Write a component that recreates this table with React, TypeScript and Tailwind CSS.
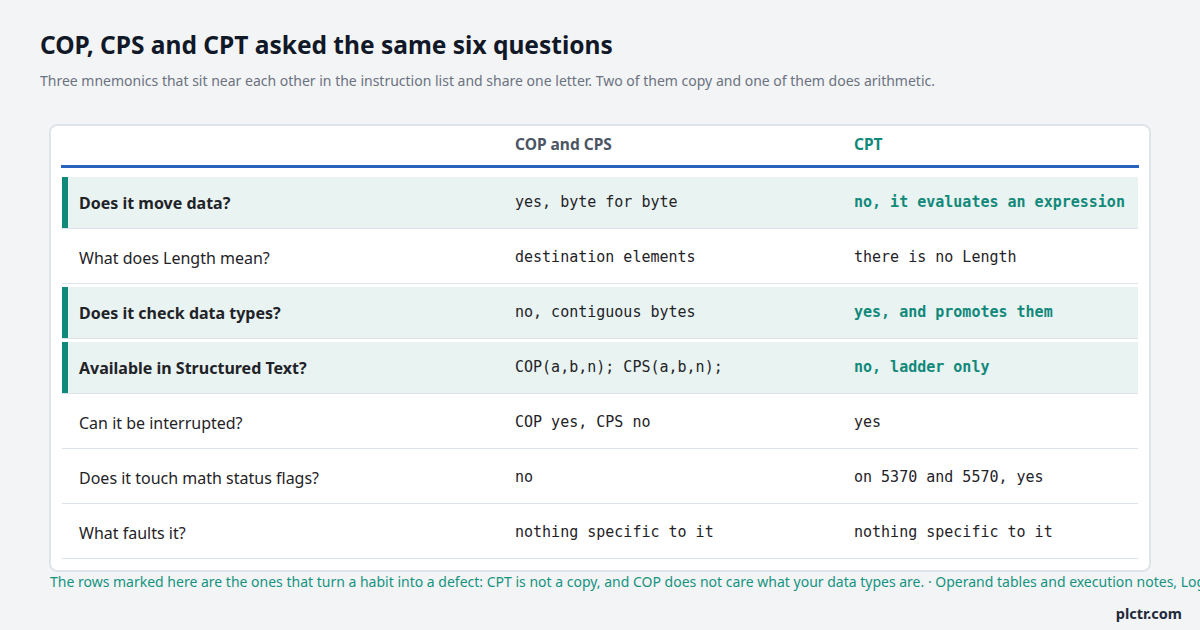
import React from "react";

type Row = { q: string; a: string; b: string; hl: boolean };

const rows: Row[] = [
  { q: "Does it move data?", a: "yes, byte for byte", b: "no, it evaluates an expression", hl: true },
  { q: "What does Length mean?", a: "destination elements", b: "there is no Length", hl: false },
  { q: "Does it check data types?", a: "no, contiguous bytes", b: "yes, and promotes them", hl: true },
  { q: "Available in Structured Text?", a: "COP(a,b,n); CPS(a,b,n);", b: "no, ladder only", hl: true },
  { q: "Can it be interrupted?", a: "COP yes, CPS no", b: "yes", hl: false },
  { q: "Does it touch math status flags?", a: "no", b: "on 5370 and 5570, yes", hl: false },
  { q: "What faults it?", a: "nothing specific to it", b: "nothing specific to it", hl: false },
];

const sans = "font-['Noto_Sans',sans-serif]";
const mono = "font-['DejaVu_Sans_Mono',monospace]";

export default function App() {
  return (
    <div className={`w-[1200px] h-[630px] overflow-hidden bg-[#f3f4f6] ${sans}`}>
      <div className="pl-[40px] pt-[29px]">
        <h1 className="text-[24.5px] leading-[32px] font-bold text-[#111827]">
          COP, CPS and CPT asked the same six questions
        </h1>
        <p className="mt-[10px] text-[14px] leading-[20px] text-[#6b7280]">
          Three mnemonics that sit near each other in the instruction list and share one letter. Two of them copy and one of them does arithmetic.
        </p>
      </div>
      <div className="ml-[49px] mt-[33px] w-[1102px] h-[448px] rounded-[8px] border-2 border-[#dfe4ea] bg-white px-[10px]">
        <div className="grid grid-cols-[437px_339px_1fr] h-[42px] items-end pb-[11px] border-b-[3px] border-[#2a63bd]">
          <div />
          <div className="pl-[17px] text-[15.5px] font-bold text-[#4b5563] leading-[20px]">COP and CPS</div>
          <div className="pl-[17px] text-[15.5px] font-bold text-[#11897a] leading-[20px]">CPT</div>
        </div>
        <div className="pt-[6px]">
          {rows.map((r, i) => (
            <div key={i} className="pt-[3px] px-[1px]">
              <div
                className={`grid grid-cols-[436px_339px_1fr] h-[52px] items-center border-b border-[#dde3ea] ${
                  r.hl ? "bg-[#e9f3f2]" : "bg-white"
                }`}
              >
                <div className="flex h-full items-center">
                  <div className={`w-[6px] h-full ${r.hl ? "bg-[#11897a]" : ""}`} />
                  <div
                    className={`pl-[11px] text-[16px] leading-[24px] text-[#1f2328] ${r.hl ? "font-bold" : ""}`}
                  >
                    {r.q}
                  </div>
                </div>
                <div className={`pl-[17px] ${mono} text-[15px] text-[#1f2328] whitespace-nowrap`}>{r.a}</div>
                <div
                  className={`pl-[17px] ${mono} text-[15px] whitespace-nowrap ${
                    r.hl ? "font-bold text-[#11897a]" : "text-[#1f2328]"
                  }`}
                >
                  {r.b}
                </div>
              </div>
            </div>
          ))}
        </div>
      </div>
      <div className="pl-[50px] text-[14px] leading-[20px] text-[#13937f] whitespace-nowrap">
        The rows marked here are the ones that turn a habit into a defect: CPT is not a copy, and COP does not care what your data types are. · Operand tables and execution notes, Logix 5000 instruction reference.
      </div>
      <div className="flex justify-end pr-[18px] mt-[11px]">
        <span className="text-[14.5px] leading-[20px] font-bold text-[#1e293b]">plctr.com</span>
      </div>
    </div>
  );
}
